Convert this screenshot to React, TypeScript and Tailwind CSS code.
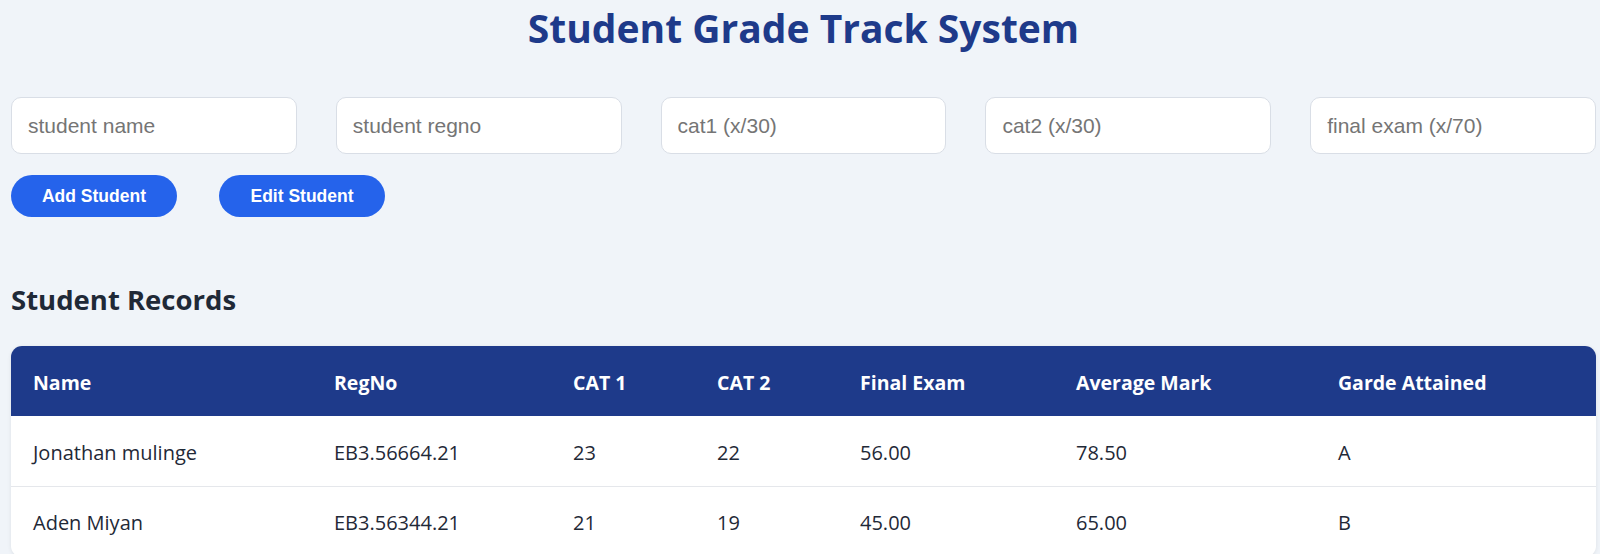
import React from "react";

const rows = [
  { name: "Jonathan mulinge", reg: "EB3.56664.21", c1: "23", c2: "22", fin: "56.00", avg: "78.50", grade: "A" },
  { name: "Aden Miyan", reg: "EB3.56344.21", c1: "21", c2: "19", fin: "45.00", avg: "65.00", grade: "B" },
];

const placeholders = ["student name", "student regno", "cat1 (x/30)", "cat2 (x/30)", "final exam (x/70)"];

export default function App() {
  return (
    <div className="min-h-screen bg-[#f0f4f9] pl-[11px] pr-[4px] font-['Open_Sans',sans-serif]">
      <h1 className="pt-[2px] text-center text-[39px] font-bold leading-[52px] text-[#1e3a8a]">
        Student Grade Track System
      </h1>
      <div className="mt-[43px] flex gap-[39px]">
        {placeholders.map((p) => (
          <input
            key={p}
            placeholder={p}
            className="h-[57px] min-w-0 flex-1 rounded-[10px] border border-[#d9dee6] bg-white px-[16px] font-['Liberation_Sans',Arial,sans-serif] text-[21px] text-[#333] placeholder:text-[#757575] outline-none"
          />
        ))}
      </div>
      <div className="mt-[21px] flex gap-[42px]">
        <button className="h-[42px] w-[166px] rounded-full bg-[#2563eb] font-['Liberation_Sans',Arial,sans-serif] text-[17.5px] font-bold text-white">
          Add Student
        </button>
        <button className="h-[42px] w-[166px] rounded-full bg-[#2563eb] font-['Liberation_Sans',Arial,sans-serif] text-[17.5px] font-bold text-white">
          Edit Student
        </button>
      </div>
      <h2 className="mt-[64px] text-[27.5px] font-bold leading-[38px] text-[#1f2937]">Student Records</h2>
      <div className="mt-[27px] overflow-hidden rounded-[11px] bg-white shadow-[0_1px_4px_rgba(0,0,0,0.08)]">
        <table className="w-full table-fixed border-collapse text-left">
          <colgroup>
            <col className="w-[301px]" />
            <col className="w-[239px]" />
            <col className="w-[144px]" />
            <col className="w-[143px]" />
            <col className="w-[216px]" />
            <col className="w-[262px]" />
            <col />
          </colgroup>
          <thead>
            <tr className="h-[70px] bg-[#1e3a8a] text-white">
              {["Name", "RegNo", "CAT 1", "CAT 2", "Final Exam", "Average Mark", "Garde Attained"].map((h) => (
                <th key={h} className="px-[22px] pt-[4px] text-[19.5px] font-bold">
                  {h}
                </th>
              ))}
            </tr>
          </thead>
          <tbody>
            {rows.map((r) => (
              <tr key={r.reg} className="h-[70px] border-b border-[#e5e7eb] text-[#1f2937]">
                {[r.name, r.reg, r.c1, r.c2, r.fin, r.avg, r.grade].map((v, i) => (
                  <td key={i} className="px-[22px] pt-[4px] text-[20px]">
                    {v}
                  </td>
                ))}
              </tr>
            ))}
          </tbody>
        </table>
      </div>
    </div>
  );
}
